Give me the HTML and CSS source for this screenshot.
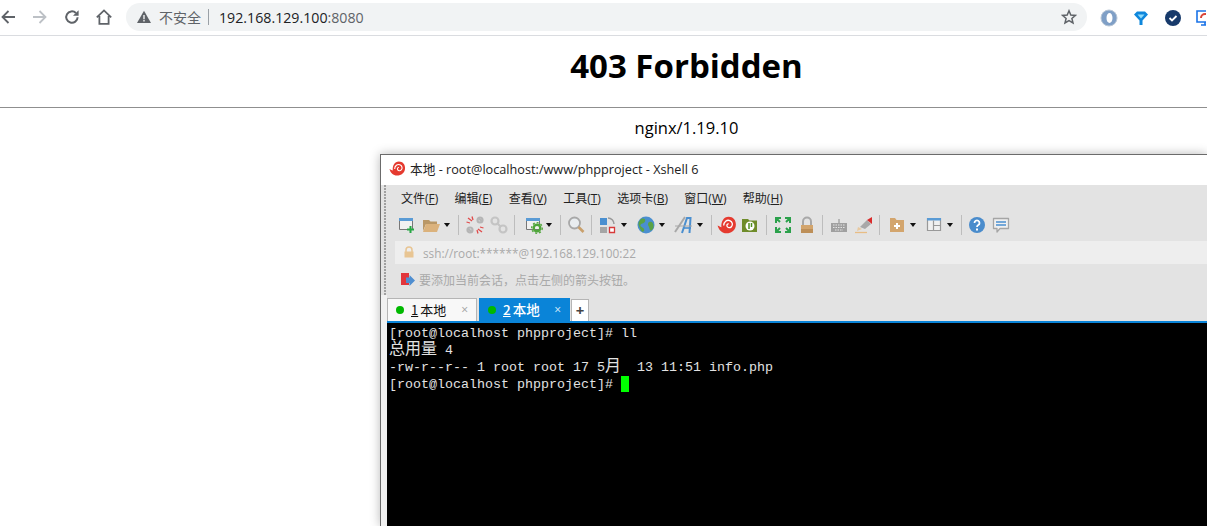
FILE: index.html
```html
<!DOCTYPE html>
<html lang="zh-CN">
<head>
<meta charset="utf-8">
<title>403 Forbidden</title>
<link rel="stylesheet" href="styles.css">
</head>
<body>
<header class="browser-bar">
  <svg class="nav-icon" viewBox="0 0 16 16"><path d="M15 8H2.500M8.500 2 2.500 8l6 6" fill="none" stroke="#5f6368" stroke-width="1.800"/></svg>
  <svg class="nav-icon" viewBox="0 0 16 16"><path d="M1 8h12.500M7.500 2l6 6-6 6" fill="none" stroke="#bdc1c6" stroke-width="1.800"/></svg>
  <svg class="nav-icon" viewBox="0 0 16 16"><path d="M13.600 8.200A5.700 5.700 0 1 1 11.900 4" fill="none" stroke="#5f6368" stroke-width="2"/><path d="M14.600 1.200v5.600H9z" fill="#5f6368"/></svg>
  <svg class="nav-icon" viewBox="0 0 16 16"><path d="M.8 8.400 8 1.400l7.200 7M3.400 7v7.800h9.200V7" fill="none" stroke="#5f6368" stroke-width="1.800"/></svg>
  <div class="omnibox">
    <svg class="warn" viewBox="0 0 14 14"><path d="M7 .8 14 13H0z" fill="#5f6368"/><path d="M6.300 5h1.400v4.200H6.300zM6.300 10h1.400v1.400H6.300z" fill="#f1f3f4"/></svg>
    <span class="insecure">不安全</span>
    <span class="omni-sep"></span>
    <span class="url">192.168.129.100<span class="port">:8080</span></span>
    <svg class="star" viewBox="0 0 16 16"><path d="M8 1.800 9.800 6l4.600.4-3.500 3 1.100 4.500L8 11.500l-4 2.400 1.100-4.500-3.500-3L6.200 6z" fill="none" stroke="#5f6368" stroke-width="1.500"/></svg>
  </div>
  <div class="extensions">
    <svg class="ext" viewBox="0 0 18 18"><circle cx="9" cy="9" r="8" fill="#7f9fc6"/><circle cx="9" cy="9" r="8" fill="none" stroke="#b8c6d6"/><ellipse cx="9.500" cy="9" rx="3" ry="5" fill="#fff"/></svg>
    <svg class="ext" viewBox="0 0 18 18"><path d="M2 5.500 5 2.500h8l3 3-5.500 6V16h-3v-4.500z" fill="#0f87dc"/><path d="M5.500 5.500h7L9 9.500z" fill="#8fdcfb"/></svg>
    <svg class="ext" viewBox="0 0 18 18"><circle cx="9" cy="9" r="8" fill="#173a6b"/><path d="m5.500 9 2.500 2.500 4.500-4.500" fill="none" stroke="#fff" stroke-width="1.800"/></svg>
    <svg class="ext ext-cut" viewBox="0 0 10 18"><path d="M1 2h16v11H1z" fill="#fff" stroke="#1a73e8" stroke-width="1.600"/><path d="M5 16h8M9 13v3" stroke="#1a73e8" stroke-width="1.600"/><path d="M5 9a4 4 0 0 1 8 0" fill="none" stroke="#d9453a" stroke-width="2"/></svg>
  </div>
</header>

<main class="page">
  <h1 class="title">403 Forbidden</h1>
  <hr class="rule">
  <p class="server">nginx/1.19.10</p>
</main>

<section class="xshell">
  <div class="titlebar">
    <svg class="shell-logo" viewBox="0 0 18 18"><path d="M.5 9.500C2 10 3 11 4 11 3.500 6 6 1.500 10.500 1.500 14.500 1.500 17 4.500 17 8.500 17 13.500 13 16.500 8.500 16.500 4.500 16.500 1.500 13.500.5 9.500z" fill="#e53a2f"/><path d="M6 9.500c0-3.500 3-5.500 5.500-4.500s3 4 1.500 5.500-3.500 1-4-.5c-.4-1.200.5-2.200 1.500-2" fill="none" stroke="#fff" stroke-width="1.200"/></svg>
    <span>本地 - root@localhost:/www/phpproject - Xshell 6</span>
  </div>
  <div class="chrome">
    <div class="grip"><div class="grip-dots"></div></div>
    <div class="chrome-main">
      <nav class="menubar">
        <span>文件(<u>F</u>)</span><span>编辑(<u>E</u>)</span><span>查看(<u>V</u>)</span><span>工具(<u>T</u>)</span><span>选项卡(<u>B</u>)</span><span>窗口(<u>W</u>)</span><span>帮助(<u>H</u>)</span>
      </nav>
      <div class="toolbar">
        <svg class="tool" viewBox="0 0 20 20"><path d="M3.500 3.500h13v11h-13z" fill="#f1f1f1" stroke="#777"/><path d="M3 3h14v3H3z" fill="#5a9bd5"/><path d="M14.500 11v7M11 14.500h7" stroke="#28a745" stroke-width="2"/></svg>
        <svg class="tool m5" viewBox="0 0 20 20"><path d="M2 5h6l1.500 1.500H16V9H5l-3 7z" fill="#b99766"/><path d="M5 9h14l-3 8H2z" fill="#dbb27c"/></svg>
        <i class="caret m2"></i>
        <i class="sep m7"></i>
        <svg class="tool m6" viewBox="0 0 20 20"><g fill="none" stroke="#b5b5b5" stroke-width="2.200"><path d="M3 13.500 6.500 17M13.500 3 17 6.500"/><circle cx="5" cy="15" r="2.500"/><circle cx="15" cy="5" r="2.500"/></g><path d="M3 3l4 3M7 1.500 8 5M1.500 7 5 8M17 17l-4-3M13 18.500 12 15M18.500 13 15 12" stroke="#e04a4a" stroke-width="1.300"/></svg>
        <svg class="tool m4" viewBox="0 0 20 20"><g fill="none" stroke="#c4c4c4" stroke-width="2.200"><circle cx="6" cy="6" r="3.500"/><circle cx="14" cy="14" r="3.500"/><path d="m8.500 8.500 3 3"/></g></svg>
        <i class="sep m5"></i>
        <svg class="tool m9" viewBox="0 0 20 20"><path d="M2.500 3.500h13v11h-13z" fill="#f1f1f1" stroke="#777"/><path d="M2 3h14v3H2z" fill="#5a9bd5"/><circle cx="13" cy="13" r="3.300" fill="none" stroke="#4fa53a" stroke-width="2.400"/><circle cx="13" cy="13" r="5.300" fill="none" stroke="#4fa53a" stroke-width="1.300" stroke-dasharray="2 2"/></svg>
        <i class="caret m1"></i>
        <i class="sep m7"></i>
        <svg class="tool m5" viewBox="0 0 20 20"><circle cx="8.500" cy="8" r="5.500" fill="#e9edf0" stroke="#a8a8a8" stroke-width="1.800"/><path d="m12.500 12 5 5" stroke="#c9a06c" stroke-width="2.600"/></svg>
        <i class="sep m5"></i>
        <svg class="tool m5" viewBox="0 0 20 20"><path d="M3 3h7v7H3z" fill="#4a8fd0"/><path d="M3 12h7v6H3z" fill="#a5a5a5"/><path d="M12.500 12.500h5v5h-5z" fill="#fff" stroke="#d83a3a" stroke-width="1.300"/><path d="M11 3a6 6 0 0 1 6 6" fill="none" stroke="#999" stroke-width="1.500"/></svg>
        <i class="caret m3"></i>
        <svg class="tool m8" viewBox="0 0 20 20"><circle cx="10" cy="10" r="8.500" fill="#4a8fd0"/><path d="M5 4c3-1 5 0 4 2.500S5 8 4.500 10 7 12 8 14s-1 3.500-2 2.500S2 10 2.500 8 4 5 5 4zM13 7c2-1 4 0 4.500 3s-1 5-2.500 5.500-1.500-3-2.500-4.500S12 8 13 7z" fill="#5aa345"/></svg>
        <i class="caret m2"></i>
        <svg class="tool m8" viewBox="0 0 20 20"><path d="M1 17 11 2" stroke="#a8a8a8" stroke-width="2"/><path d="M8 18 13 3h3.500l-1 15" fill="none" stroke="#4a8fd0" stroke-width="2"/><path d="M1 11h17" stroke="#a8a8a8"/><path d="M10 13h7" stroke="#4a8fd0" stroke-width="1.600"/></svg>
        <i class="caret m2"></i>
        <i class="sep m7"></i>
        <svg class="tool m5" viewBox="0 0 18 18"><path d="M.5 9.500C2 10 3 11 4 11 3.500 6 6 1.500 10.500 1.500 14.500 1.500 17 4.500 17 8.500 17 13.500 13 16.500 8.500 16.500 4.500 16.500 1.500 13.500.5 9.500z" fill="#e53a2f"/><path d="M6 9.500c0-3.500 3-5.500 5.500-4.500s3 4 1.500 5.500-3.500 1-4-.5c-.4-1.200.5-2.200 1.500-2" fill="none" stroke="#fff" stroke-width="1.200"/></svg>
        <svg class="tool m3" viewBox="0 0 20 20"><path d="M2 4h6l1.500 1.500H17V17H2z" fill="#6f8c2a"/><circle cx="10" cy="11" r="4.500" fill="#fff"/><path d="M9 8v6M11.500 8v4" stroke="#4f8f1f" stroke-width="1.500"/></svg>
        <i class="sep m6"></i>
        <svg class="tool m6" viewBox="0 0 20 20"><path d="M3 8V3h5M12 3h5v5M17 12v5h-5M8 17H3v-5M3 3l4 4M17 3l-4 4M17 17l-4-4M3 17l4-4" fill="none" stroke="#2ba14b" stroke-width="2"/></svg>
        <svg class="tool m4" viewBox="0 0 20 20"><path d="M6 10V6.500a4 4 0 0 1 8 0V10" fill="none" stroke="#a8a8a8" stroke-width="2"/><path d="M4 10h12v8H4z" fill="#d3a56d"/><path d="M4 14h12v4H4z" fill="#bd8f58"/></svg>
        <i class="sep m5"></i>
        <svg class="tool m6" viewBox="0 0 20 20"><path d="M2 8h16v9H2z" fill="#a0a0a0"/><path d="M4 10h12M4 12.500h12M6 15h8" stroke="#e3e3e3" stroke-dasharray="1.500 1" stroke-width="1.200"/><path d="M10 8V4" stroke="#888"/></svg>
        <svg class="tool m5" viewBox="0 0 20 20"><path d="M6 12 13 5l4 4-6 5z" fill="#a8a8a8"/><path d="M13 5l5-3v7z" fill="#d92c2c"/><path d="M4 12l4 2-5 2z" fill="#e8c9a0"/><path d="M1 17.500h12" stroke="#e8bd85" stroke-width="1.300"/></svg>
        <i class="sep m5"></i>
        <svg class="tool m7" viewBox="0 0 20 20"><path d="M3 3h5l1.500 2H17v12H3z" fill="#d3a56d"/><path d="M10 8v6M7 11h6" stroke="#fff" stroke-width="2"/></svg>
        <i class="caret m2"></i>
        <svg class="tool m7" viewBox="0 0 20 20"><path d="M3.500 3.500h13v12h-13z" fill="#f0f0f0" stroke="#999" stroke-width="1.200"/><path d="M3 3h14v2.500H3z" fill="#5a9bd5"/><path d="M9.500 5.500v10M9.500 10.500h7" stroke="#999" stroke-width="1.200"/></svg>
        <i class="caret m2"></i>
        <i class="sep m7"></i>
        <svg class="tool m5" viewBox="0 0 20 20"><circle cx="10" cy="10" r="8" fill="#4a8ccc"/><path d="M7.500 8a2.500 2.500 0 1 1 3.800 2.100c-.9.600-1.300 1-1.300 2" fill="none" stroke="#fff" stroke-width="1.800"/><path d="M9 13.500h2v2H9z" fill="#fff"/></svg>
        <svg class="tool m4" viewBox="0 0 20 20"><path d="M2.500 3.500h15v10H9L6 17v-3.500H2.500z" fill="#f0f0f0" stroke="#a5a5a5" stroke-width="1.300" stroke-linejoin="round"/><path d="M5 7h10M5 10h10" stroke="#4a8fd0" stroke-width="1.500"/></svg>
      </div>
      <div class="address">
        <svg class="addr-lock" viewBox="0 0 12 12"><path d="M3 6V4a3 3 0 0 1 6 0v2" fill="none" stroke="#e8c593" stroke-width="1.500"/><path d="M1.500 5.500h9v6h-9z" fill="#e8c593"/></svg>
        <span>ssh://root:******@192.168.129.100:22</span>
      </div>
      <div class="hint">
        <svg class="hint-icon" viewBox="0 0 14 14"><path d="M0 0h8v12H0z" fill="#e2363c"/><path d="M5 4.500h3.500V2L14 7.500 8.500 13v-3H5z" fill="#4f8ed0"/></svg>
        <span>要添加当前会话，点击左侧的箭头按钮。</span>
      </div>
      <div class="tabs">
        <div class="tab"><i class="dot"></i><span class="tab-name"><u>1</u> 本地</span><span class="tab-x">×</span></div>
        <div class="tab active"><i class="dot"></i><span class="tab-name"><u>2</u> 本地</span><span class="tab-x">×</span></div>
        <div class="tab-add">+</div>
      </div>
      <pre class="terminal">[root@localhost phpproject]# ll
<span class="cjk">总用量</span> 4
-rw-r--r-- 1 root root 17 5<span class="cjk">月</span>  13 11:51 info.php
[root@localhost phpproject]# <i class="cursor"></i></pre>
    </div>
  </div>
</section>
</body>
</html>
```
FILE: styles.css
```css
* { box-sizing: border-box; }
html, body { margin: 0; height: 100%; overflow: hidden; background: #fff; }
body { width: 1207px; height: 526px; position: relative; font-family: "Open Sans", "Noto Sans CJK SC", sans-serif; }

.browser-bar { height: 36px; border-bottom: 1px solid #dadce0; display: flex; align-items: center; background: #fff; overflow: hidden; }
.nav-icon { width: 16px; height: 16px; margin-left: 16px; flex: none; margin-top: -1px; }
.nav-icon:first-child { margin-left: 0; }
.omnibox { width: 961px; height: 28px; margin-left: 14px; background: #f1f3f4; border-radius: 14px; display: flex; align-items: center; padding-left: 11px; padding-right: 10px; font-size: 14px; margin-top: -1px; flex: none; }
.warn { width: 14px; height: 14px; flex: none; }
.insecure { margin-left: 8px; color: #5f6368; font-family: "Noto Sans CJK SC", sans-serif; font-size: 14px; }
.omni-sep { width: 1px; height: 16px; background: #9aa0a6; margin: 0 10px 0 7px; }
.url { color: #202124; font-size: 14.200px; }
.port { color: #5f6368; }
.star { width: 16px; height: 16px; margin-left: auto; }
.extensions { display: flex; gap: 14px; margin-left: 13px; }
.ext { width: 18px; height: 18px; flex: none; }
.ext-cut { width: 10px; }

.page { padding-left: 166px; }
.title { margin: 0; padding-top: 6px; height: 71px; text-align: center; font-size: 33px; line-height: 48px; font-weight: 700; color: #000; }
.rule { margin: 0 0 0 -166px; border: 0; border-top: 1px solid #8f8f8f; height: 1px; }
.server { margin: 0; padding-top: 9px; text-align: center; font-size: 16.500px; line-height: 22px; color: #000; }

.xshell { position: absolute; left: 380px; top: 154px; right: 0; bottom: 0; border: 1px solid #6b6b6b; border-right: 0; border-bottom: 0; box-shadow: 0 0 10px rgba(0,0,0,.28); background: #e3e3e3; display: flex; flex-direction: column; }
.titlebar { height: 30px; background: #fff; display: flex; align-items: center; padding: 0 0 4px 8px; gap: 4px; font-size: 12.700px; color: #222; flex: none; }
.shell-logo { width: 17px; height: 17px; flex: none; }
.chrome { display: flex; flex: 1; min-height: 0; }
.grip { width: 6px; flex: none; background: #f1f1f1; }
.grip-dots { height: 110px; background-color: #e3e3e3; background-image: radial-gradient(circle at 1px 1px, #a0a0a0 1px, transparent 1px); background-size: 3px 3px; background-position: 3px 0; background-repeat: repeat-y; }
.chrome-main { flex: 1; min-width: 0; display: flex; flex-direction: column; }
.menubar { height: 25px; display: flex; align-items: center; gap: 16.300px; padding-left: 14px; font-size: 12px; color: #222; flex: none; }
.toolbar { height: 31px; display: flex; align-items: center; padding-left: 9px; padding-bottom: 1px; flex: none; }
.tool { width: 20px; height: 20px; flex: none; }
.caret { width: 8px; height: 4px; flex: none; background: #111; clip-path: polygon(12% 0, 88% 0, 50% 100%); }
.sep { width: 1px; height: 20px; flex: none; background: #bdbdbd; }
.m1 { margin-left: 1px; } .m2 { margin-left: 2px; } .m3 { margin-left: 3px; } .m4 { margin-left: 4px; } .m5 { margin-left: 5px; } .m6 { margin-left: 6px; } .m7 { margin-left: 7px; } .m8 { margin-left: 8px; } .m9 { margin-left: 9px; }
.address { height: 23px; margin-left: 8px; background: #eeeeee; display: flex; align-items: center; padding-left: 8px; gap: 8px; font-size: 11.800px; color: #a9a9a9; flex: none; }
.addr-lock { width: 12px; height: 12px; margin-top: -2px; }
.hint { height: 34px; display: flex; align-items: center; padding-left: 14px; gap: 4px; font-size: 12px; color: #a9a9a9; padding-bottom: 3px; flex: none; }
.hint-icon { width: 14px; height: 14px; flex: none; }
.tabs { height: 23px; display: flex; gap: 2px; flex: none; }
.tab { width: 90px; height: 23px; background: #f8f8f8; border: 1px solid #b5b5b5; border-bottom: 0; display: flex; align-items: center; padding: 0 0 2px 8px; font-size: 13px; color: #111; }
.tab.active { width: 91px; background: #0a84d8; border-color: #0a84d8; color: #fff; font-weight: 500; font-size: 13.500px; }
.dot { width: 8px; height: 8px; border-radius: 50%; background: #00b900; flex: none; margin-top: 2px; }
.tab-name { margin-left: 7px; font-family: "Noto Sans CJK SC", sans-serif; word-spacing: -1px; }
.tab-x { margin-left: auto; margin-right: 8px; color: #a0a0a0; font-size: 12px; }
.active .tab-x { color: #d8ecfa; }
.tab-add { width: 18px; height: 22px; margin-top: 1px; margin-left: -1px; background: #fff; border: 1px solid #b5b5b5; border-bottom: 0; text-align: center; font-size: 15px; line-height: 20px; font-weight: 700; color: #444; }
.terminal { margin: 0; flex: 1; min-height: 0; background: #000; border-top: 2px solid #0a84d8; padding: 2px 0 0 2px; font-family: "Liberation Mono", monospace; font-size: 13.333px; line-height: 17px; color: #e2e2e2; overflow: hidden; }
.cjk { font-family: "Noto Sans CJK SC", sans-serif; font-size: 16px; line-height: 0; }
.cursor { display: inline-block; width: 8px; height: 16px; background: #00ff00; vertical-align: -4px; }
```
